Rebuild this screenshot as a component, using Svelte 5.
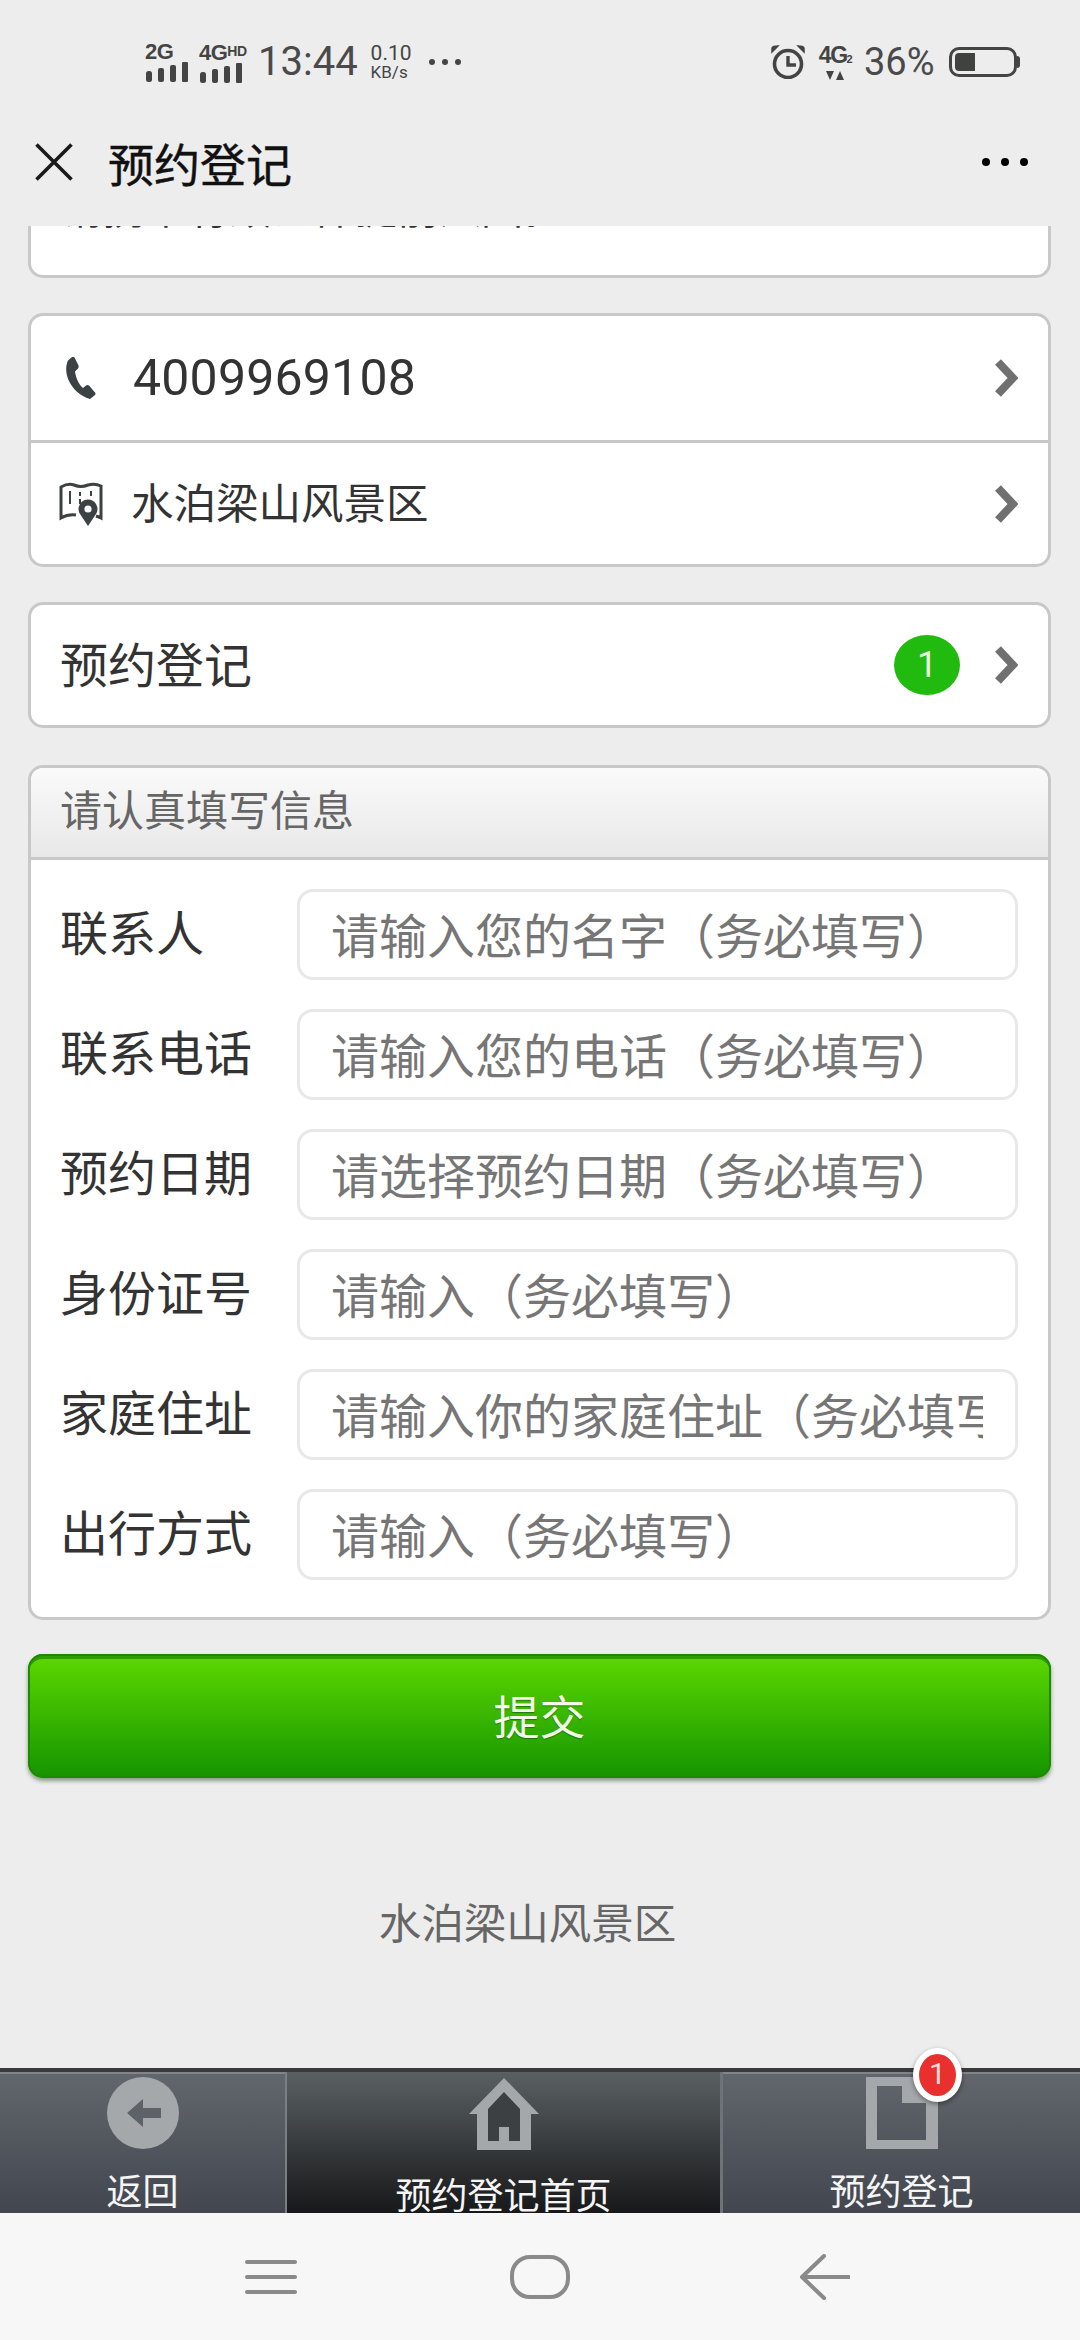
<script>
  const fields = [
    { label: "联系人", hint: "请输入您的名字（务必填写）" },
    { label: "联系电话", hint: "请输入您的电话（务必填写）" },
    { label: "预约日期", hint: "请选择预约日期（务必填写）" },
    { label: "身份证号", hint: "请输入（务必填写）" },
    { label: "家庭住址", hint: "请输入你的家庭住址（务必填写）" },
    { label: "出行方式", hint: "请输入（务必填写）" },
  ];
</script>

{#snippet chevron()}
  <svg class="chevron" viewBox="0 0 24 40" aria-hidden="true">
    <path d="M4 4 L19 20 L4 36" fill="none" stroke="#707070" stroke-width="8" stroke-linejoin="miter" />
  </svg>
{/snippet}

{#snippet bars()}
  <svg class="bars" viewBox="0 0 42 20" aria-hidden="true">
    <rect x="0" y="9" width="6" height="11" rx="2.5" />
    <rect x="12" y="6" width="6" height="14" rx="2" />
    <rect x="24" y="3" width="6" height="17" rx="2" />
    <rect x="36" y="0" width="6" height="20" rx="1" />
  </svg>
{/snippet}

<div class="screen">
  <div class="status">
    <div class="status-left">
      <div class="signal">
        <span class="net">2G</span>
        {@render bars()}
      </div>
      <div class="signal">
        <span class="net">4G<small>HD</small></span>
        {@render bars()}
      </div>
      <span class="time">13:44</span>
      <span class="speed"><b>0.10</b><i>KB/s</i></span>
      <span class="more">
        <em></em><em></em><em></em>
      </span>
    </div>
    <div class="status-right">
      <svg class="alarm" viewBox="0 0 34 34" aria-hidden="true">
        <circle cx="17" cy="19" r="13.5" fill="none" stroke="#444" stroke-width="3.6" />
        <path d="M17 11 V20 H25" fill="none" stroke="#444" stroke-width="3.4" />
        <path d="M1 7 L7 1 Q2 1 1 3 Z M33 7 L27 1 Q32 1 33 3 Z" fill="#444" stroke="#444" stroke-width="1.5" />
      </svg>
      <div class="net4">
        <span>4G<small>2</small></span>
        <svg viewBox="0 0 18 10" aria-hidden="true">
          <path d="M0 0 H8 L4 9 Z M10 9 H18 L14 0 Z" fill="#444" />
        </svg>
      </div>
      <span class="percent">36%</span>
      <div class="battery">
        <div class="battery-fill"></div>
      </div>
      <div class="battery-tip"></div>
    </div>
  </div>

  <header class="topbar">
    <svg class="close" viewBox="0 0 38 38" aria-hidden="true">
      <path d="M1.5 1.5 L36.5 36.5 M36.5 1.5 L1.5 36.5" stroke="#1a1a1a" stroke-width="3.6" />
    </svg>
    <h1>预约登记</h1>
    <span class="topbar-more"><em></em><em></em><em></em></span>
  </header>

  <main class="content">
    <section class="card clipped">
      <p>请携带有效证件提前入园。</p>
    </section>

    <section class="card">
      <div class="row">
        <svg class="row-icon phone" viewBox="0 0 30 42" aria-hidden="true">
          <path d="M6 0 L2 3.5 C-0.5 9 -0.5 16 2.5 23 C6.5 32 14 39 24 42 L29 38 Q30 36.5 29 35.5 L23 28.5 Q21.5 27.5 20 28.5 L17 31 C12.5 27 10 21 9 14.5 L12 11.5 Q13 10 12.5 8.5 L8.5 0.5 Q7.5 -0.5 6 0 Z" fill="#3c4244" />
        </svg>
        <span class="phone-num">4009969108</span>
        {@render chevron()}
      </div>
      <div class="row">
        <svg class="row-icon map" viewBox="0 0 44 44" aria-hidden="true">
          <path d="M17 33 Q9 32 2 36 V5 Q9 1 15 3 Q22 6 29 3 Q36 1 42 4 V36 Q40 35 37 34" fill="none" stroke="#3c4244" stroke-width="3" />
          <path d="M11 9 V22 M21 10 V14 M21 17 V22 M32 9 V14" stroke="#3c4244" stroke-width="2" fill="none" />
          <path d="M29 44 L21 32 A9.5 9.5 0 1 1 37 32 Z" fill="#3c4244" />
          <circle cx="29" cy="27" r="3.6" fill="#fff" />
        </svg>
        <span class="row-text">水泊梁山风景区</span>
        {@render chevron()}
      </div>
    </section>

    <section class="card">
      <div class="row booking">
        <span class="booking-text">预约登记</span>
        <span class="count">1</span>
        {@render chevron()}
      </div>
    </section>

    <section class="card form">
      <div class="form-head">请认真填写信息</div>
      <div class="form-body">
        {#each fields as field}
          <label class="field">
            <span>{field.label}</span>
            <input type="text" placeholder={field.hint} />
          </label>
        {/each}
      </div>
    </section>

    <button class="submit" type="button">提交</button>

    <div class="brand">水泊梁山风景区</div>
  </main>

  <nav class="tabs">
    <div class="tab side first">
      <svg class="tab-icon" viewBox="0 0 72 72" aria-hidden="true">
        <circle cx="36" cy="36" r="36" fill="#a4a8ab" />
        <path d="M20 36 L36 22 V31 H54 V41 H36 V50 Z" fill="#5c6268" />
      </svg>
      <span>返回</span>
    </div>
    <div class="tab middle">
      <svg class="tab-icon home" viewBox="0 0 70 72" aria-hidden="true">
        <path d="M35 0 L70 36 H62 V72 H8 V36 H0 Z" fill="#a4a8ab" />
        <path d="M35 14 L51 31 V63 H40 V49 H30 V63 H19 V31 Z" fill="#3c4043" />
      </svg>
      <span>预约登记首页</span>
    </div>
    <div class="tab side last">
      <svg class="tab-icon" viewBox="0 0 72 72" aria-hidden="true">
        <path fill-rule="evenodd" d="M0 0 H72 V72 H0 Z M11 9 V63 H60 V26 H36 V9 Z" fill="#a4a8ab" />
      </svg>
      <span>预约登记</span>
      <div class="badge">1</div>
    </div>
  </nav>

  <div class="sysnav">
    <div class="menu-btn"><em></em><em></em><em></em></div>
    <div class="home-btn"></div>
    <svg class="back-btn" viewBox="0 0 50 46" aria-hidden="true">
      <path d="M24 2 L2 23 L24 44 M2 23 H49" fill="none" stroke="#8a8a8a" stroke-width="4" stroke-linecap="round" stroke-linejoin="round" />
    </svg>
  </div>
</div>

<style>
  :global(body) {
    margin: 0;
    background: #ededed;
  }

  .screen {
    width: 1080px;
    height: 2340px;
    display: flex;
    flex-direction: column;
    background: #ededed;
    font-family: "Noto Sans CJK SC", "Noto Sans", sans-serif;
    overflow: hidden;
  }

  /* status bar */
  .status {
    height: 110px;
    display: flex;
    justify-content: space-between;
    align-items: flex-start;
    padding: 41px 60px 0 145px;
    box-sizing: border-box;
    color: #444;
    font-family: Roboto, "Liberation Sans", sans-serif;
  }

  .status-left,
  .status-right {
    display: flex;
    align-items: center;
    height: 42px;
  }

  .signal {
    display: flex;
    flex-direction: column;
    width: 44px;
    margin-right: 10px;
  }

  .net {
    font-family: "Liberation Sans", sans-serif;
    font-weight: 700;
    font-size: 22px;
    line-height: 19px;
    white-space: nowrap;
    letter-spacing: -0.5px;
  }

  .net small {
    font-size: 14px;
    vertical-align: 4px;
  }

  .bars {
    display: block;
    width: 44px;
    height: 20px;
    margin-top: 1px;
    fill: #444;
  }

  .time {
    font-size: 40px;
    line-height: 42px;
    margin: 0 13px 0 5px;
    color: #4a4a4a;
  }

  .speed {
    display: flex;
    flex-direction: column;
    width: 46px;
    line-height: 1;
  }

  .speed b {
    font-weight: 400;
    font-size: 21px;
  }

  .speed i {
    font-style: normal;
    font-size: 17px;
  }

  .more {
    display: flex;
    gap: 7px;
    margin-left: 12px;
  }

  .more em {
    width: 6px;
    height: 6px;
    border-radius: 50%;
    background: #444;
  }

  .alarm {
    width: 34px;
    height: 34px;
    margin-right: 12px;
  }

  .net4 {
    width: 36px;
    display: flex;
    flex-direction: column;
    align-items: center;
    margin-right: 11px;
  }

  .net4 span {
    font-family: "Liberation Sans", sans-serif;
    font-weight: 700;
    font-size: 23px;
    line-height: 22px;
    letter-spacing: -1.5px;
    white-space: nowrap;
  }

  .net4 small {
    font-size: 11px;
  }

  .net4 svg {
    width: 18px;
    height: 10px;
    margin-top: 1px;
  }

  .percent {
    font-size: 38px;
    line-height: 42px;
    width: 85px;
    color: #4a4a4a;
  }

  .battery {
    width: 68px;
    height: 30px;
    box-sizing: border-box;
    border: 3px solid #444;
    border-radius: 10px;
    padding: 3px;
  }

  .battery-fill {
    width: 20px;
    height: 100%;
    background: #3f423f;
    border-radius: 4px 0 0 4px;
  }

  .battery-tip {
    width: 3px;
    height: 12px;
    background: #444;
    border-radius: 0 3px 3px 0;
  }

  /* title bar */
  .topbar {
    height: 116px;
    display: flex;
    align-items: center;
    padding: 0 52px 12px 35px;
    box-sizing: border-box;
    background: #ededed;
  }

  .close {
    width: 38px;
    height: 38px;
    margin-right: 35px;
  }

  h1 {
    flex: 1;
    margin: 0;
    font-size: 46px;
    font-weight: 400;
    color: #111;
    -webkit-text-stroke: 0.4px #111;
    line-height: 1;
  }

  .topbar-more {
    display: flex;
    gap: 11px;
  }

  .topbar-more em {
    width: 8px;
    height: 8px;
    border-radius: 50%;
    background: #000;
  }

  /* page */
  .content {
    flex: 1;
    min-height: 0;
    overflow: hidden;
    padding: 0 29px 0 28px;
    display: flex;
    flex-direction: column;
  }

  .card {
    flex: none;
    background: #fff;
    border: 3px solid #c8c8c8;
    border-radius: 15px;
    margin-bottom: 35px;
    box-sizing: border-box;
  }

  .clipped {
    height: 152px;
    margin-top: -100px;
    padding: 60px 0 0 30px;
    border-top: 0;
  }

  .clipped p {
    margin: 0;
    font-size: 42px;
    line-height: 40px;
    color: #333;
  }

  .row {
    height: 124px;
    display: flex;
    align-items: center;
    box-sizing: border-box;
    padding-right: 30px;
  }

  .row + .row {
    border-top: 3px solid #c8c8c8;
  }

  .row-icon {
    flex: none;
  }

  .phone {
    width: 30px;
    height: 42px;
    margin: 0 37px 0 35px;
  }

  .map {
    width: 44px;
    height: 44px;
    margin: 0 28px 0 28px;
  }

  .phone-num {
    flex: 1;
    font-family: Roboto, "Liberation Sans", sans-serif;
    font-size: 50px;
    color: #333;
    letter-spacing: 0.2px;
  }

  .row-text {
    flex: 1;
    font-size: 42.5px;
    color: #333;
    margin-top: -7px;
  }

  .chevron {
    width: 24px;
    height: 40px;
    flex: none;
  }

  .booking {
    height: 120px;
  }

  .booking-text {
    flex: 1;
    padding-left: 29px;
    font-size: 48px;
    color: #333;
    margin-top: -6px;
  }

  .count {
    width: 66px;
    height: 60px;
    margin-right: 34px;
    border-radius: 50%;
    background: #20bb0e;
    color: #e8f8e0;
    font-family: Roboto, sans-serif;
    font-size: 36px;
    line-height: 60px;
    text-align: center;
  }

  .form {
    margin-bottom: 34px;
    margin-top: 2px;
  }

  .form-head {
    height: 92px;
    padding-left: 29px;
    box-sizing: border-box;
    border-bottom: 3px solid #c8c8c8;
    border-radius: 12px 12px 0 0;
    background: linear-gradient(#fafafa, #e8e8e8);
    color: #666;
    font-size: 42px;
    line-height: 80px;
  }

  .form-body {
    display: flex;
    flex-direction: column;
    gap: 29px;
    padding: 29px 30px 37px 29px;
  }

  .field {
    display: flex;
    align-items: center;
    height: 91px;
  }

  .field span {
    width: 237px;
    flex: none;
    font-size: 48px;
    line-height: 1;
    color: #333;
    margin-top: -10px;
  }

  .field input {
    flex: 1;
    min-width: 0;
    height: 91px;
    box-sizing: border-box;
    padding: 0 32px 4px 31px;
    border: 3px solid #e8e8e8;
    border-radius: 16px;
    background: #fff;
    font-family: inherit;
    font-size: 48px;
    outline: none;
  }

  .field input::placeholder {
    color: #767676;
    opacity: 1;
  }

  .submit {
    flex: none;
    height: 124px;
    border: 0;
    border-radius: 15px;
    background: linear-gradient(#5bd600 3%, #47c400 30%, #1c9b00 90%, #1a9000);
    box-shadow: inset 0 0 0 2px #1d8a00, inset 0 5px 0 #2f9c00, 0 3px 4px rgba(0, 60, 0, 0.45);
    color: #f2fbe6;
    font-family: inherit;
    font-size: 46px;
    text-shadow: 0 1px 1px rgba(0, 60, 0, 0.5);
    padding: 0 0 4px;
  }

  .brand {
    margin-top: 115px;
    padding-right: 24px;
    text-align: center;
    color: #666;
    font-size: 42.5px;
    line-height: 56px;
  }

  /* bottom tabs */
  .tabs {
    flex: none;
    height: 145px;
    display: flex;
    border-top: 4px solid #3a3a3c;
    box-sizing: border-box;
    color: #f5f5f5;
  }

  .tab {
    position: relative;
    display: flex;
    flex-direction: column;
    align-items: center;
    box-sizing: border-box;
    padding-top: 5px;
    font-size: 36px;
    line-height: 40px;
  }

  .tab span {
    margin-top: 20px;
    white-space: nowrap;
  }

  .side {
    background: linear-gradient(#62676d, #42464f);
    box-shadow: inset 0 2px 0 #80858a;
  }

  .first {
    width: 287px;
    border-right: 2px solid #7a7f85;
  }

  .last {
    width: 360px;
    border-left: 3px solid #6e7378;
  }

  .middle {
    flex: 1;
    padding-top: 6px;
    background: linear-gradient(#5a6062, #17181a);
  }

  .middle span {
    margin-top: 23px;
  }

  .tab-icon {
    width: 72px;
    height: 72px;
    flex: none;
  }

  .home {
    width: 70px;
  }

  .badge {
    position: absolute;
    top: -24px;
    left: 190px;
    width: 37px;
    height: 42px;
    border: 6px solid #fff;
    border-radius: 50%;
    background: #e8302e;
    color: #f8dcdc;
    font-family: Roboto, sans-serif;
    font-size: 30px;
    line-height: 40px;
    text-align: center;
    box-shadow: 0 2px 5px rgba(0, 0, 0, 0.4);
  }

  /* android nav */
  .sysnav {
    flex: none;
    height: 127px;
    display: flex;
    align-items: center;
    box-sizing: border-box;
    padding-left: 245px;
    background: #f7f7f7;
  }

  .menu-btn {
    width: 52px;
    display: flex;
    flex-direction: column;
    gap: 11px;
  }

  .menu-btn em {
    height: 4px;
    border-radius: 2px;
    background: #8a8a8a;
  }

  .home-btn {
    width: 60px;
    height: 44px;
    margin-left: 213px;
    box-sizing: border-box;
    border: 4px solid #8a8a8a;
    border-radius: 20px;
  }

  .back-btn {
    width: 50px;
    height: 46px;
    margin-left: 230px;
  }
</style>
